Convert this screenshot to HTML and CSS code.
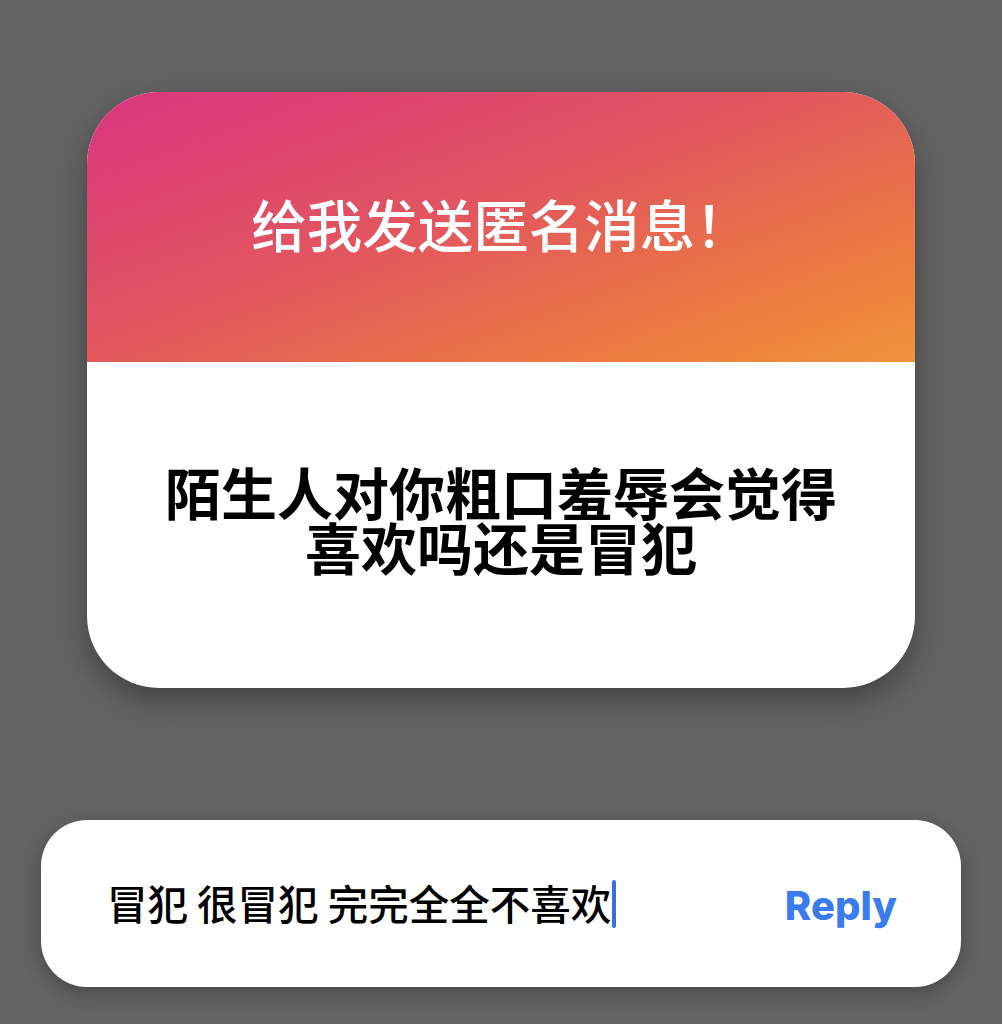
FILE: index.html
```html
<!DOCTYPE html>
<html lang="zh-CN">
<head>
<meta charset="utf-8">
<title>匿名消息</title>
<link rel="stylesheet" href="styles.css">
</head>
<body>
<div class="page">
  <section class="card">
    <header class="card-head">
      <h1 class="card-title">给我发送匿名消息！</h1>
    </header>
    <div class="card-body">
      <p class="question">陌生人对你粗口羞辱会觉得<br>喜欢吗还是冒犯</p>
    </div>
  </section>
  <div class="reply-box">
    <div class="reply-input"><span class="reply-text">冒犯 很冒犯 完完全全不喜欢</span><span class="caret"></span></div>
    <div class="reply-btn">Reply</div>
  </div>
</div>
</body>
</html>
```
FILE: styles.css
```css
html, body {
  margin: 0;
  padding: 0;
}
body {
  background: #646464;
  width: 1002px;
  height: 1024px;
  overflow: hidden;
  font-family: "Noto Sans CJK SC", "Noto Sans", sans-serif;
}
.page {
  display: flex;
  flex-direction: column;
  padding-top: 92px;
}
.card {
  margin-left: 87px;
  width: 828px;
  height: 596px;
  border-radius: 72px;
  overflow: hidden;
  background: #ffffff;
  box-shadow: 0 12px 30px rgba(0, 0, 0, 0.35);
  display: flex;
  flex-direction: column;
}
.card-head {
  height: 270px;
  background: linear-gradient(160deg, #d9357f 0%, #e2565e 45%, #ec7d40 80%, #f0923a 100%);
  display: flex;
  align-items: center;
  justify-content: center;
}
.card-title {
  margin: 0 0 6px 0;
  color: #ffffff;
  font-size: 55.5px;
  font-weight: 500;
  line-height: 1;
  letter-spacing: 0;
}
.card-body {
  flex: 1;
  display: flex;
  align-items: center;
  justify-content: center;
}
.question {
  margin: 0 0 14px 0;
  color: #000000;
  text-align: center;
  font-size: 56px;
  font-weight: 700;
  line-height: 55px;
}
.reply-box {
  margin-top: 132px;
  margin-left: 41px;
  width: 920px;
  height: 167px;
  box-sizing: border-box;
  border-radius: 46px;
  background: #ffffff;
  box-shadow: 0 6px 20px rgba(0, 0, 0, 0.3);
  display: flex;
  align-items: center;
  justify-content: space-between;
  padding: 0 64px 0 66px;
}
.reply-input {
  display: flex;
  align-items: center;
}
.reply-text {
  color: #000000;
  font-size: 40.5px;
  font-weight: 500;
  line-height: 1;
}
.caret {
  width: 4px;
  height: 48px;
  border-radius: 2px;
  background: #3a6ee6;
  margin-left: 1px;
}
.reply-btn {
  color: #3a7bf0;
  font-family: Inter, "Liberation Sans", sans-serif;
  font-size: 40px;
  font-weight: 800;
  line-height: 1;
  margin-top: 4px;
}
```
